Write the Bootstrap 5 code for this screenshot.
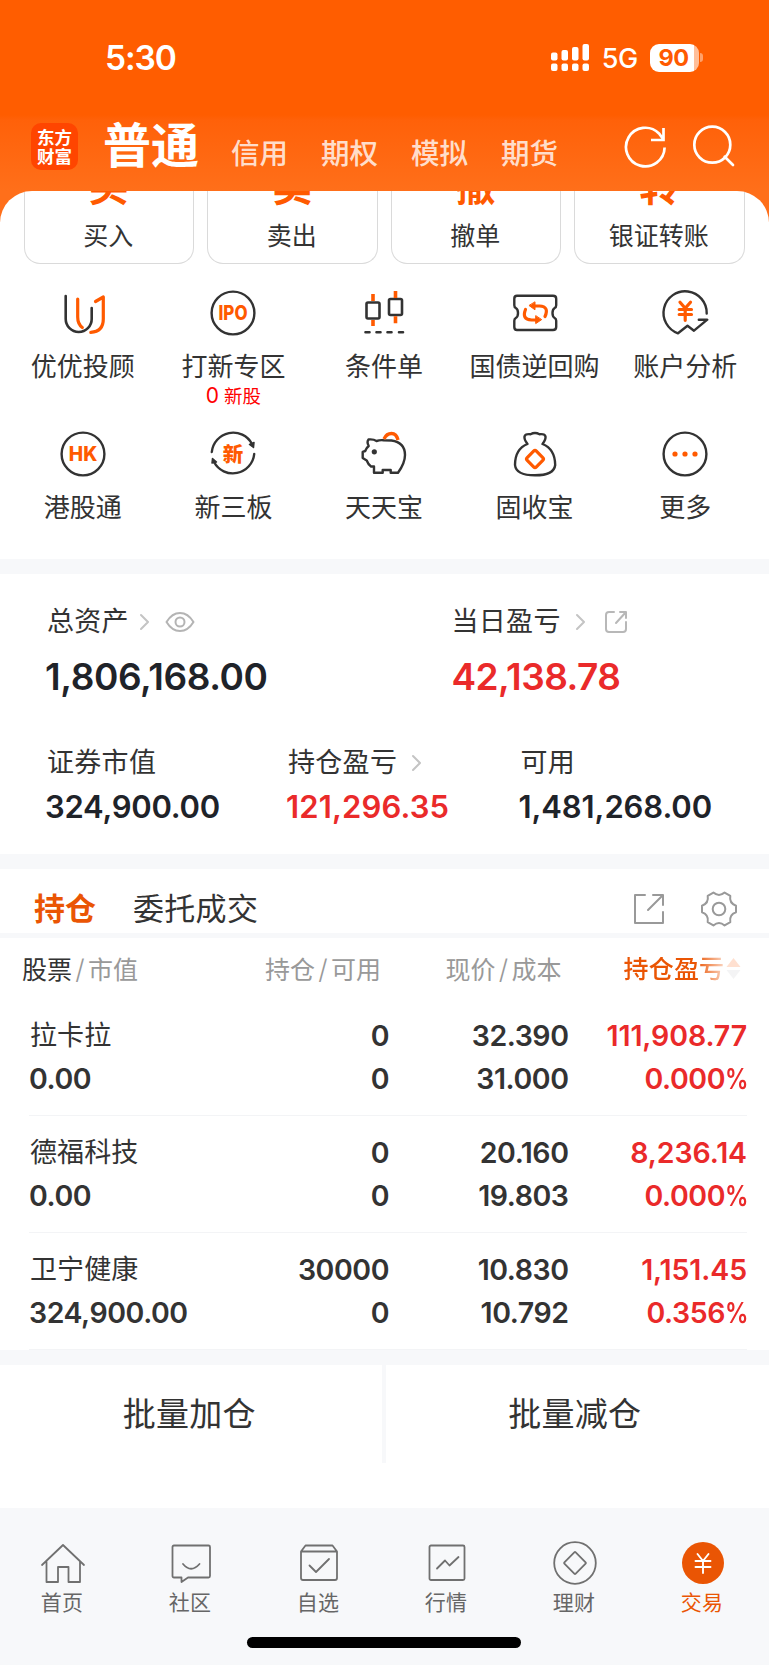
<!DOCTYPE html>
<html lang="zh-CN">
<head>
<meta charset="utf-8">
<meta name="viewport" content="width=device-width, initial-scale=1">
<title>交易</title>
<link rel="stylesheet" href="https://cdn.jsdelivr.net/npm/bootstrap@5.3.0/dist/css/bootstrap.min.css">
<style>
:root{--ink:#333;--num:#1f2329;--red:#ea2a2a;--orange:#ff5a00;--deep:#ea5504;--band:#f7f8fa}
body{font-family:Inter,"Noto Sans CJK SC",sans-serif;color:var(--ink);background:#fff;overflow-x:hidden;line-height:1}
svg{display:block;flex:none;fill:none;stroke-linecap:round;stroke-linejoin:round}
.solid{fill:#fff}
.top{height:222px;background:linear-gradient(#ff5d00 0,#ff5d00 115px,#ff6109 120px,#ff6f1a 191px,#ff6f1a 100%)}
.status{height:115px;padding:0 66px 0 105px}
.clock{font-size:33.5px;font-weight:600;line-height:30px;letter-spacing:-1.1px}
.net{font-size:27px;font-weight:500;line-height:28px;margin:2px 12px 0 12px;letter-spacing:-.3px}
.batt{width:49px;height:28px;border-radius:9px;background:linear-gradient(90deg,#fff 90%,#ffbe99 90%);color:var(--orange);font-size:23.5px;font-weight:700;line-height:28px;padding-right:2px;letter-spacing:-.5px}
.nub{width:3px;height:9px;border-radius:0 4px 4px 0;background:#ffa16b;margin-left:1px}
.brand{height:76px;padding-left:31px}
.logo{width:47px;height:47px;border-radius:10px;background:#ff4500;font-size:17.5px;font-weight:700;line-height:19px;margin-top:8px}
.brand-on{font-size:48px;font-weight:700;line-height:46px;margin:8px 0 0 25px}
.brand-tabs{gap:33px;margin-left:32px}
.brand-tab{font-size:28.5px;font-weight:500;line-height:30px;color:rgba(255,255,255,.8);margin-top:24px}
.sheet{margin-top:-31px;border-radius:32px 32px 0 0;background:#fff;height:368px;overflow:hidden}
.quick{padding:0 24.5px 0 23.5px;gap:13px;height:73px}
.qcard{flex:1 1 0;border:1.5px solid #dadada;border-top:0;border-radius:0 0 16px 16px;height:73px;overflow:hidden}
.qglyph{font-size:40px;font-weight:700;color:var(--orange);height:16px;line-height:40px;overflow:hidden}
.qname{font-size:25px;line-height:30px;margin-top:14px;margin-left:-1px}
.apps{padding:0 8.5px 0 7.5px;margin-top:22px}
.app-item{width:20%;height:141px}
.app-name{font-size:26px;line-height:30px;margin-top:12px;white-space:nowrap}
.app-sub{font-size:18.5px;color:#f00;line-height:20px;margin-top:4px}
.app-sub b{font-size:21px;font-weight:400}
.band{height:15px;background:var(--band)}
.assets{height:280px;padding:33px 0 0 45px}
.lab{font-size:27px;line-height:30px;white-space:nowrap;letter-spacing:.3px;padding-left:2px}
.big{font-size:37px;font-weight:600;line-height:40px;color:var(--num);letter-spacing:-.4px;margin-top:20px}
.mid{font-size:31px;font-weight:600;line-height:34px;color:var(--num);margin-top:12px;letter-spacing:-.1px}
.up{color:var(--red)!important}
.arr{margin-left:15px}
.tabs-x{height:64px;padding:15px 31px 0 34px}
.tab{font-size:31px;line-height:34px}
.rule{height:5px;background:var(--band)}
.thead-x{height:61px;font-size:25px;color:#999;padding:1px 0 0 22px;white-space:nowrap}
.sl{display:inline-block;width:16px;text-align:center;font-size:27px;font-weight:300}
.h1x{width:243px}.h2x{width:180.5px}.h3x{width:178px}
.fade-end{color:var(--deep);font-weight:500;letter-spacing:.2px;-webkit-mask-image:linear-gradient(90deg,#000 72%,rgba(0,0,0,.3) 98%);mask-image:linear-gradient(90deg,#000 72%,rgba(0,0,0,.3) 98%)}
.hold{height:117.1px;margin:0 22px 0 29px;border-bottom:1.5px solid #f3f4f6;font-size:28.5px;font-weight:600;line-height:43px;padding-top:15px;white-space:nowrap;letter-spacing:-.45px}
.hname{font-size:27px;font-weight:400;letter-spacing:.1px;padding-left:1px}
.c1{width:200px}.c2{width:160px}.c3{width:179.500px}.c4{width:178.500px}
.c4>div:first-child{letter-spacing:-.1px}
.pct{display:inline-block;width:22px;transform:scaleX(.82);transform-origin:0 50%;text-align:left}
.bulk{height:98px;font-size:33px;line-height:98px;letter-spacing:.3px}
.bulk>div{flex:1 1 0;padding-right:3px}
.bulk>div+div{border-left:4px solid var(--band);padding-right:5px}
.blank{height:45px}
.bar{height:156.500px;background:var(--band)}
.bar-row{padding:33px 2px 0 0;margin-left:-1px}
.bar-item{width:16.6667%;font-size:21px;color:#666;line-height:24px}
.bar-item svg{stroke:#707070;stroke-width:1.8}
.bar-item span{margin-top:4px;margin-left:-2px;letter-spacing:.2px}
.homebar{width:274px;height:10.500px;border-radius:6px;background:#000;margin:22px auto 0;position:relative;left:-.5px}
</style>
</head>
<body>
<header class="top text-white">
  <div class="status d-flex align-items-center justify-content-between">
    <span class="clock">5:30</span>
    <div class="d-flex align-items-center">
      <svg class="solid" width="40" height="28" viewBox="0 0 40 28"><rect x="1" y="8.500" width="6.500" height="8" rx="2"/><rect x="11.500" y="6" width="6.500" height="10.500" rx="2"/><rect x="22" y="3" width="6.500" height="13.500" rx="2"/><rect x="32.500" y="0" width="6.500" height="16.500" rx="2"/><rect x="1" y="19.500" width="6.500" height="7.500" rx="2"/><rect x="11.500" y="19.500" width="6.500" height="7.500" rx="2"/><rect x="22" y="19.500" width="6.500" height="7.500" rx="2"/><rect x="32.500" y="19.500" width="6.500" height="7.500" rx="2"/></svg>
      <span class="net">5G</span>
      <div class="batt text-center">90</div><div class="nub"></div>
    </div>
  </div>
  <div class="brand d-flex">
    <div class="logo d-flex flex-column justify-content-center text-center"><span>东方</span><span>财富</span></div>
    <div class="brand-on">普通</div>
    <div class="brand-tabs d-flex"><span class="brand-tab">信用</span><span class="brand-tab">期权</span><span class="brand-tab">模拟</span><span class="brand-tab">期货</span></div>
    <div class="d-flex gap-4 ms-auto pe-4" style="margin-top:10px;margin-right:9px">
      <svg width="44" height="44" viewBox="0 0 44 44" stroke="#fff" stroke-width="2.7" style="stroke-linecap:butt;stroke-linejoin:miter"><path d="M40.600 22.500A19.300 19.300 0 1 1 35 8.500l4.500 6M39.500 3v12H27"/></svg>
      <svg width="44" height="44" viewBox="0 0 44 44" stroke="#fff" stroke-width="2.700"><circle cx="20.300" cy="19.700" r="18"/><path d="M32.700 31.700l8.300 8.300"/></svg>
    </div>
  </div>
</header>
<section class="sheet position-relative">
  <div class="quick d-flex text-center">
    <div class="qcard"><div class="qglyph d-flex align-items-end justify-content-center"><span>买</span></div><div class="qname">买入</div></div>
    <div class="qcard"><div class="qglyph d-flex align-items-end justify-content-center"><span>卖</span></div><div class="qname">卖出</div></div>
    <div class="qcard"><div class="qglyph d-flex align-items-end justify-content-center"><span>撤</span></div><div class="qname">撤单</div></div>
    <div class="qcard"><div class="qglyph d-flex align-items-end justify-content-center"><span>转</span></div><div class="qname">银证转账</div></div>
  </div>
  <div class="apps d-flex flex-wrap">
    <div class="app-item d-flex flex-column align-items-center">
      <svg width="54" height="54" viewBox="0 0 54 54" stroke-width="2.600"><path stroke="#333" d="M9.700 10v23a13 13 0 0 0 26 0V22"/><path stroke="#ff5a00" stroke-width="3.200" d="M21.700 13v18q0 7 4.600 10.500M39.500 15.500l7.800-4.500v22q0 12.500-12.500 13.300"/></svg>
      <div class="app-name">优优投顾</div></div>
    <div class="app-item d-flex flex-column align-items-center">
      <svg width="54" height="54" viewBox="0 0 54 54" stroke-width="2.400"><circle stroke="#333" cx="27" cy="27" r="21.400"/><text x="12.500" y="34.200" textLength="29" lengthAdjust="spacingAndGlyphs" font-family="Inter" font-weight="800" font-size="20" style="fill:#ff5a00">IPO</text></svg>
      <div class="app-name">打新专区</div><div class="app-sub"><b>0</b> 新股</div></div>
    <div class="app-item d-flex flex-column align-items-center">
      <svg width="54" height="54" viewBox="0 0 54 54" stroke-width="2.600"><g stroke="#333"><rect x="9.500" y="16.500" width="13" height="16" rx="1.500"/><rect x="32" y="13" width="13" height="16" rx="1.500"/><path d="M8.500 46.300h4M19.500 46.300h4M30.500 46.300h4M42 46.300h4"/></g><path stroke="#ff5a00" stroke-width="3.600" style="stroke-linecap:butt" d="M16 8v7M16 34v6M38.500 5v7M38.500 30.300v7"/></svg>
      <div class="app-name">条件单</div></div>
    <div class="app-item d-flex flex-column align-items-center">
      <svg width="54" height="54" viewBox="0 0 54 54" stroke-width="2.400"><path stroke="#333" d="M9 9.700H45q3.200 0 3.200 3v6.500q0 2-1.500 2.800-2.200 1.200-2.200 5t2.200 5q1.500.800 1.500 2.800v6.200q0 3-3.200 3H9q-2.700 0-2.700-3v-6.200q0-2 1.500-2.800 2.200-1.200 2.200-5t-2.200-5Q6.300 21.200 6.300 19.200v-6.500q0-3 2.700-3z"/><g stroke="#ff5a00" stroke-width="3.200"><path d="M17.500 23.500Q13.500 33.500 23.500 34H29M37 30.500Q41.500 20.500 31.500 20H26"/></g><path style="fill:#ff5a00" stroke="#ff5a00" stroke-width="1" d="M27 16.200v7.600L21.300 19.700zM27.700 30v7.600l5.700-3.800z"/></svg>
      <div class="app-name">国债逆回购</div></div>
    <div class="app-item d-flex flex-column align-items-center">
      <svg width="54" height="54" viewBox="0 0 54 54" stroke-width="2.400"><path stroke="#333" d="M48.700 27.500A21.600 21.600 0 1 0 20 47.300L29.500 39.700l6.500 5L49.300 33.700h-8.500"/><path stroke="#ff5a00" stroke-width="3.200" d="M22 16.300l5.200 6 5.300-6M27.200 23v11.300M21.200 23.500h12.300M21.200 28.500h12.300"/></svg>
      <div class="app-name">账户分析</div></div>
    <div class="app-item d-flex flex-column align-items-center">
      <svg width="54" height="54" viewBox="0 0 54 54" stroke-width="2.400"><circle stroke="#333" cx="27" cy="27" r="21.400"/><text x="12.800" y="34.200" textLength="28.500" lengthAdjust="spacingAndGlyphs" font-family="Inter" font-weight="800" font-size="20" style="fill:#ff5a00">HK</text></svg>
      <div class="app-name">港股通</div></div>
    <div class="app-item d-flex flex-column align-items-center">
      <svg width="54" height="54" viewBox="0 0 54 54" stroke-width="2.400"><path stroke="#333" d="M5.800 25A21.400 21.400 0 0 1 46 17M48.200 27A21.400 21.400 0 0 1 8 35"/><path style="fill:#333" stroke="#333" stroke-width="1.500" d="M43.500 17.500l4 3 .5-5zM10.500 35l-4-3.500-.500 4.500z"/><text x="27" y="34.500" text-anchor="middle" font-family="Noto Sans CJK SC" font-weight="900" font-size="20.500" style="fill:#ff5a00">新</text></svg>
      <div class="app-name">新三板</div></div>
    <div class="app-item d-flex flex-column align-items-center">
      <svg width="54" height="54" viewBox="0 0 54 54" stroke-width="2.400"><path stroke="#333" d="M11.500 12.500q5-.5 8 1.500 3.500-1.200 7-.8l8 .300Q48 15.500 48 28q0 8-7 17.800h-7.300V43h-8v2.800H17V39.500h-3Q11.500 38 9.700 33.500L5.700 31v-6.200l2.500-.800q1-3 3.500-5-2.200-4-.200-6.500z"/><circle cx="17.300" cy="24.800" r="2.600" style="fill:#333"/><path stroke="#ff5a00" stroke-width="3.400" style="stroke-linecap:butt" d="M27 12q2.500-5.500 7.500-5.500T41 13"/></svg>
      <div class="app-name">天天宝</div></div>
    <div class="app-item d-flex flex-column align-items-center">
      <svg width="54" height="54" viewBox="0 0 54 54" stroke-width="2.400"><path stroke="#333" d="M19.500 17q-3.500-4.500-3-7.500.5-2.800 6-2.300 4.500-2.500 9 0 5.500-.5 6 2.300.5 3-3 7.500Q47 22 47.200 38 46 48.300 27 48.300T7 38Q7 22 19.500 17z"/><rect x="20.500" y="25.500" width="13" height="13" rx="2" transform="rotate(45 27 32)" stroke="#ff5a00" stroke-width="3.200"/></svg>
      <div class="app-name">固收宝</div></div>
    <div class="app-item d-flex flex-column align-items-center">
      <svg width="54" height="54" viewBox="0 0 54 54" stroke-width="2.400"><circle stroke="#333" cx="27" cy="27" r="21.400"/><g style="fill:#ff5a00"><circle cx="17" cy="27" r="2.600"/><circle cx="27" cy="27" r="2.600"/><circle cx="37" cy="27" r="2.600"/></g></svg>
      <div class="app-name">更多</div></div>
  </div>
</section>
<div class="band"></div>
<section class="assets">
  <div class="d-flex">
    <div style="width:406.5px">
      <div class="lab d-flex align-items-center">总资产
        <svg width="10" height="18" viewBox="0 0 10 18" stroke="#c4c4c4" stroke-width="2" style="margin-left:11px"><path d="M1 2l7 7-7 7"/></svg>
        <svg width="32" height="22" viewBox="0 0 32 22" stroke="#b4b4b4" stroke-width="2" style="margin-left:14px"><path d="M2.500 11Q8 2 16 2t13.500 9q-5.500 9-13.500 9T2.500 11z"/><circle cx="16" cy="11" r="4.500"/></svg>
      </div>
      <div class="big">1,806,168.00</div>
    </div>
    <div>
      <div class="lab d-flex align-items-center ps-0">当日盈亏
        <svg class="arr" width="10" height="18" viewBox="0 0 10 18" stroke="#c4c4c4" stroke-width="2"><path d="M1 2l7 7-7 7"/></svg>
        <svg width="24" height="24" viewBox="0 0 24 24" stroke="#b8b8b8" stroke-width="2" style="margin-left:18px"><path d="M10 2H5Q2 2 2 5v14q0 3 3 3h14q3 0 3-3v-7M16 2h6v6M22 2L12 13"/></svg>
      </div>
      <div class="big up" style="letter-spacing:-.55px">42,138.78</div>
    </div>
  </div>
  <div class="d-flex" style="margin-top:51px">
    <div style="width:241px"><div class="lab">证券市值</div><div class="mid" style="letter-spacing:-.25px">324,900.00</div></div>
    <div style="width:232.5px"><div class="lab d-flex align-items-center">持仓盈亏<svg class="arr" width="10" height="18" viewBox="0 0 10 18" stroke="#c4c4c4" stroke-width="2"><path d="M1 2l7 7-7 7"/></svg></div><div class="mid up" style="letter-spacing:.15px">121,296.35</div></div>
    <div><div class="lab">可用</div><div class="mid">1,481,268.00</div></div>
  </div>
</section>
<div class="band"></div>
<section>
  <div class="tabs-x d-flex align-items-center">
    <span class="tab fw-bold" style="color:var(--deep)">持仓</span><span class="tab" style="margin-left:37px;letter-spacing:.3px">委托成交</span>
    <svg class="ms-auto" width="32" height="32" viewBox="0 0 32 32" stroke="#999" stroke-width="2"><path d="M12 2H2v28h28V19M20 2h10v10M30 2L15 17"/></svg>
    <svg width="38" height="36" viewBox="0 0 38 36" stroke="#999" stroke-width="2" style="margin-left:35px"><path d="M36 14.700V21.300Q29 23.800 30.300 31.100L24.600 34.400Q19 29.500 13.400 34.400L7.700 31.100Q9 23.800 2 21.300V14.700Q9 12.200 7.700 4.900L13.400 1.600Q19 6.500 24.600 1.600L30.300 4.900Q29 12.200 36 14.700z"/><circle cx="19" cy="18" r="6.300"/></svg>
  </div>
  <div class="rule"></div>
  <div class="thead-x d-flex align-items-center">
    <div class="h1x"><span style="color:var(--ink)">股票</span><span class="sl">/</span>市值</div>
    <div class="h2x">持仓<span class="sl">/</span>可用</div>
    <div class="h3x">现价<span class="sl">/</span>成本</div>
    <div class="fade-end">持仓盈亏</div>
    <svg width="15" height="24" viewBox="0 0 15 24" style="margin-left:2px"><path d="M7.500 1L14.500 10H.500z" style="fill:#ffe0d0"/><path d="M7.500 22L14.500 13H.500z" style="fill:#f4f4f5"/></svg>
  </div>
  <div class="hold d-flex"><div class="c1"><div class="hname">拉卡拉</div><div>0.00</div></div><div class="c2 text-end"><div>0</div><div>0</div></div><div class="c3 text-end"><div>32.390</div><div>31.000</div></div><div class="c4 text-end up"><div>111,908.77</div><div>0.000<span class="pct">%</span></div></div></div>
  <div class="hold d-flex"><div class="c1"><div class="hname">德福科技</div><div>0.00</div></div><div class="c2 text-end"><div>0</div><div>0</div></div><div class="c3 text-end"><div>20.160</div><div>19.803</div></div><div class="c4 text-end up"><div>8,236.14</div><div>0.000<span class="pct">%</span></div></div></div>
  <div class="hold d-flex"><div class="c1"><div class="hname">卫宁健康</div><div>324,900.00</div></div><div class="c2 text-end"><div>30000</div><div>0</div></div><div class="c3 text-end"><div>10.830</div><div>10.792</div></div><div class="c4 text-end up"><div>1,151.45</div><div>0.356<span class="pct">%</span></div></div></div>
</section>
<div class="band"></div>
<div class="bulk d-flex text-center"><div>批量加仓</div><div>批量减仓</div></div>
<div class="blank"></div>
<nav class="bar">
  <div class="bar-row d-flex">
    <div class="bar-item d-flex flex-column align-items-center"><svg width="46" height="46" viewBox="0 0 46 46"><path d="M2 24L23 4l21 20M6.500 20.500V41h11.500V26h10.500v15H40V20.500"/></svg><span>首页</span></div>
    <div class="bar-item d-flex flex-column align-items-center"><svg width="46" height="46" viewBox="0 0 46 46"><path d="M6 4.500H40.500q1.500 0 1.500 1.500V35q0 1.500-1.500 1.500H20L13.500 41v-4.500H6q-1.500 0-1.500-1.500V6q0-1.500 1.500-1.500zM15 23q8 9.500 16.500 0"/></svg><span>社区</span></div>
    <div class="bar-item d-flex flex-column align-items-center"><svg width="46" height="46" viewBox="0 0 46 46"><path d="M5 10.500h36V37q0 2-2 2H7q-2 0-2-2zL9.500 4.500h27l4.500 6M13.500 24.500l6.500 6.500L33 18"/></svg><span>自选</span></div>
    <div class="bar-item d-flex flex-column align-items-center"><svg width="46" height="46" viewBox="0 0 46 46"><rect x="5.500" y="4.500" width="35" height="34.500" rx="1.500"/><path d="M13 27.500l8-8 4.500 5L34.500 16"/></svg><span>行情</span></div>
    <div class="bar-item d-flex flex-column align-items-center"><svg width="46" height="46" viewBox="0 0 46 46"><circle cx="23" cy="22" r="20.800"/><rect x="15" y="14" width="16" height="16" rx="1" transform="rotate(45 23 22)"/></svg><span>理财</span></div>
    <div class="bar-item d-flex flex-column align-items-center" style="color:var(--deep)"><svg width="46" height="46" viewBox="0 0 46 46"><circle cx="23" cy="22" r="21" style="fill:#ea5504;stroke:none"/><path style="stroke:#fff;stroke-width:1.900" d="M17.500 13L23 20l5.500-7M23 20v12M15.500 20h15M15.500 26h15"/></svg><span>交易</span></div>
  </div>
  <div class="homebar"></div>
</nav>
</body>
</html>
